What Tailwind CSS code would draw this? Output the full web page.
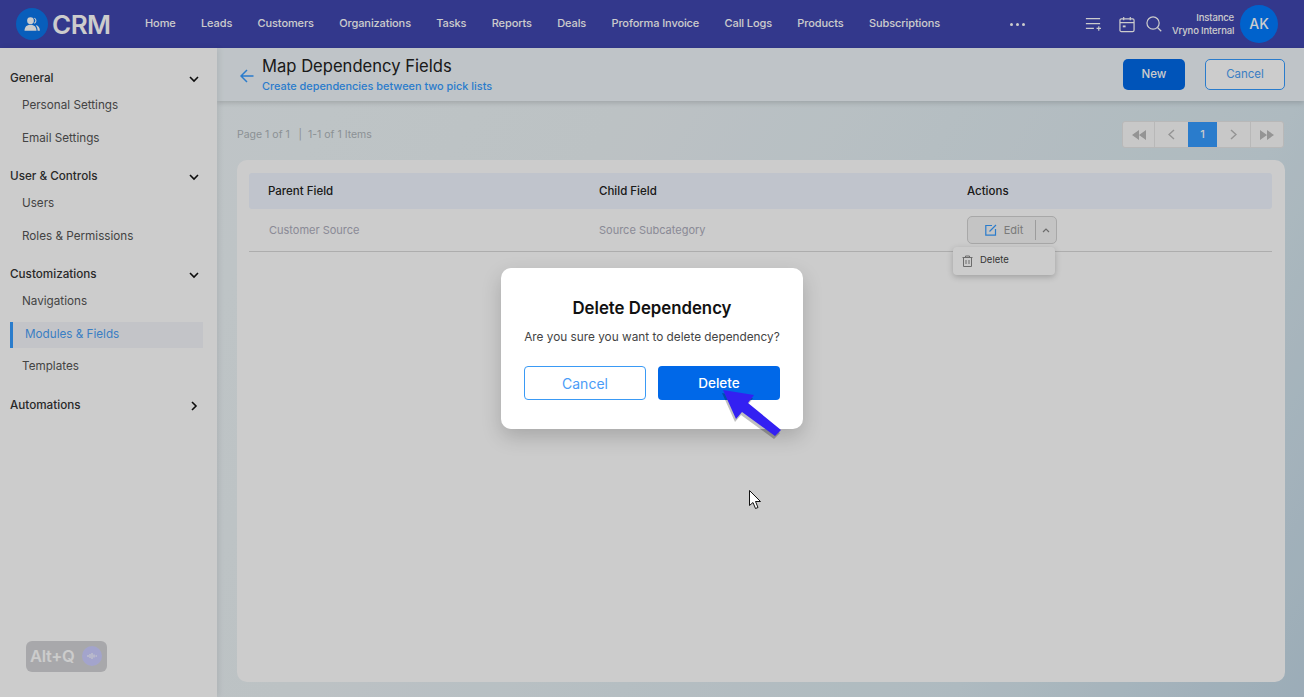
<!DOCTYPE html>
<html lang="en">
<head>
    <meta charset="UTF-8">
    <title>Map Dependency Fields - CRM</title>
    <meta name="viewport" content="width=device-width, initial-scale=1.0">
    <script src="https://cdn.jsdelivr.net/npm/@tailwindcss/browser@4"></script>
</head>

<body class="relative h-screen overflow-hidden flex flex-col font-['Inter','Liberation_Sans',sans-serif] text-[#222]">
    <!-- top nav -->
    <nav class="h-12 shrink-0 flex items-center bg-[#4046af] text-white">
        <div class="w-[145px] shrink-0 flex items-center pl-4">
            <span class="w-[32px] h-[32px] rounded-full bg-[#0a76ea] flex items-center justify-center">
                <svg class="w-[18px] h-[18px]" viewBox="0 0 24 24" fill="white">
                    <circle cx="10" cy="7.5" r="4.5"/>
                    <path d="M2 21c0-5 3-8 8-8s8 3 8 8z"/>
                    <path d="M15.5 3.5a4.5 4.5 0 0 1 0 8l-.9-.9a3.5 3.5 0 0 0 0-6.2zM18 13.5c2.800.800 4.500 3.500 4.500 7.500h-3c0-3-1-5.500-2.500-7z"/>
                </svg>
            </span>
            <span class="ml-[4px] text-[26px] font-semibold tracking-[-0.5px]">CRM</span>
        </div>
        <div class="flex items-center gap-[25.300px] text-[11px] font-medium tracking-[-0.1px] whitespace-nowrap mb-[2px]">
            <a>Home</a>
            <a>Leads</a>
            <a>Customers</a>
            <a>Organizations</a>
            <a>Tasks</a>
            <a>Reports</a>
            <a>Deals</a>
            <a>Proforma Invoice</a>
            <a>Call Logs</a>
            <a>Products</a>
            <a>Subscriptions</a>
        </div>
        <div class="ml-auto flex items-center">
            <span class="flex gap-[3px] mr-[60px]">
                <i class="w-[3px] h-[3px] rounded-full bg-white"></i>
                <i class="w-[3px] h-[3px] rounded-full bg-white"></i>
                <i class="w-[3px] h-[3px] rounded-full bg-white"></i>
            </span>
            <svg class="w-[16px] h-[16px] mr-[18px]" viewBox="0 0 18 18" fill="none" stroke="white" stroke-width="1.300">
                <path d="M1 3h16M1 8.500h16M1 14h9M13 14h5M15.500 11.500v5"/>
            </svg>
            <svg class="w-[16px] h-[17px] mr-[11px]" viewBox="0 0 17 18" fill="none" stroke="white" stroke-width="1.300">
                <rect x="1" y="3" width="15" height="13.500" rx="1.500"/>
                <path d="M1 7h15M5 1v3.500M12 1v3.500"/>
                <rect x="4" y="10" width="3" height="2" fill="white" stroke="none"/>
            </svg>
            <svg class="w-[16px] h-[16px] mr-[10px]" viewBox="0 0 17 17" fill="none" stroke="white" stroke-width="1.300">
                <circle cx="7.500" cy="7.500" r="6.500"/>
                <path d="M12.200 12.200l4 4"/>
            </svg>
            <div class="w-[62px] text-right text-[9.500px] leading-[13px] font-medium tracking-[-0.15px] whitespace-nowrap">
                <div>Instance</div>
                <div>Vryno Internal</div>
            </div>
            <span class="ml-[6px] mr-[26px] w-[38px] h-[38px] rounded-full bg-[#007bff] flex items-center justify-center text-sm font-medium">AK</span>
        </div>
    </nav>

    <div class="flex-1 flex min-h-0">
        <!-- settings sidebar -->
        <aside class="w-[217px] shrink-0 bg-white pt-[19px] text-[11.700px] z-10 shadow-[2px_0_6px_rgba(0,0,0,0.08)]">
            <div class="pb-[10px]">
                <div class="h-6 -mb-px pl-[10px] pr-[17px] flex items-center justify-between font-medium text-[#333]">General
                    <svg class="w-3 h-3" viewBox="0 0 12 12" fill="none" stroke="#111" stroke-width="1.600"><path d="M2 4l4 4 4-4"/></svg>
                </div>
                <a class="h-[32.500px] pl-[22px] flex items-center text-[#555]">Personal Settings</a>
                <a class="h-[32.500px] pl-[22px] flex items-center text-[#555]">Email Settings</a>
            </div>
            <div class="pb-[10px]">
                <div class="h-6 -mb-px pl-[10px] pr-[17px] flex items-center justify-between font-medium text-[#333]">User &amp; Controls
                    <svg class="w-3 h-3" viewBox="0 0 12 12" fill="none" stroke="#111" stroke-width="1.600"><path d="M2 4l4 4 4-4"/></svg>
                </div>
                <a class="h-[32.500px] pl-[22px] flex items-center text-[#555]">Users</a>
                <a class="h-[32.500px] pl-[22px] flex items-center text-[#555]">Roles &amp; Permissions</a>
            </div>
            <div class="pb-[11px]">
                <div class="h-6 -mb-px pl-[10px] pr-[17px] flex items-center justify-between font-medium text-[#333]">Customizations
                    <svg class="w-3 h-3" viewBox="0 0 12 12" fill="none" stroke="#111" stroke-width="1.600"><path d="M2 4l4 4 4-4"/></svg>
                </div>
                <a class="h-[32.500px] pl-[22px] flex items-center text-[#555]">Navigations</a>
                <a class="h-[26px] my-[3px] ml-[10px] mr-[14px] pl-3 flex items-center border-l-[3px] border-[#359bff] bg-[#f4f6fa] text-[#4a9ef5]">Modules &amp; Fields</a>
                <a class="h-[32.500px] pl-[22px] flex items-center text-[#555]">Templates</a>
            </div>
            <div class="h-6 pl-[10px] pr-[17px] flex items-center justify-between font-medium text-[#333]">Automations
                <svg class="w-3 h-3" viewBox="0 0 12 12" fill="none" stroke="#111" stroke-width="1.600"><path d="M4 2l4 4-4 4"/></svg>
            </div>
        </aside>

        <main class="flex-1 min-w-0 flex flex-col bg-[linear-gradient(120deg,#eff6f9_0%,#ecf3f6_30%,#dae9f0_76%,#c3d8e6_100%)]">
            <header class="h-[53px] shrink-0 flex items-center bg-[#eff6fa] shadow-[0_2px_5px_rgba(0,0,0,0.15)] pl-[23px] pr-[19px]">
                <svg class="w-[14px] h-[14px] mt-[3px]" viewBox="0 0 14 14" fill="none" stroke="#359bff" stroke-width="1.500"><path d="M13.500 7H1M7 1L1 7l6 6"/></svg>
                <div class="ml-2 mb-[2px]">
                    <h1 class="text-[16.600px] leading-6 font-normal text-[#222]">Map Dependency Fields</h1>
                    <p class="text-[10.900px] leading-4 font-medium text-[#359bff]">Create dependencies between two pick lists</p>
                </div>
                <button class="ml-auto w-[62px] h-[31px] rounded-[5px] bg-[#006ae8] text-white text-[11.500px] font-medium">New</button>
                <button class="ml-5 w-[80px] h-[31px] rounded-[5px] border border-[#359bff] bg-white text-[#4a9ef5] text-[11.500px]">Cancel</button>
            </header>

            <div class="flex-1 flex flex-col pl-5 pr-[19px] pt-5 pb-[15px] min-h-0">
                <div class="h-[27px] shrink-0 flex items-center justify-between">
                    <p class="text-[10.500px] text-[#aeb5ba] whitespace-pre">Page 1 of 1   |  1-1 of 1 Items</p>
                    <div class="flex h-[27px] mr-px rounded-[3px] overflow-hidden border border-[#e6e6e6] bg-[#fbfbfb] text-[#b9b9b9]">
                        <span class="w-[32px] flex items-center justify-center border-r border-[#e6e6e6]">
                            <svg class="w-[14px] h-[10px]" viewBox="0 0 14 10" fill="currentColor"><path d="M7 0v10L0 5zM14 0v10L7 5z"/></svg>
                        </span>
                        <span class="w-[33px] flex items-center justify-center">
                            <svg class="w-[7px] h-[11px]" viewBox="0 0 7 11" fill="none" stroke="currentColor" stroke-width="1.500"><path d="M6 1L1 5.500 6 10"/></svg>
                        </span>
                        <span class="w-[29px] flex items-center justify-center bg-[#359bff] text-white text-[11px] font-medium">1</span>
                        <span class="w-[34px] flex items-center justify-center border-r border-[#e6e6e6]">
                            <svg class="w-[7px] h-[11px]" viewBox="0 0 7 11" fill="none" stroke="currentColor" stroke-width="1.500"><path d="M1 1l5 4.500L1 10"/></svg>
                        </span>
                        <span class="w-[32px] flex items-center justify-center">
                            <svg class="w-[14px] h-[10px]" viewBox="0 0 14 10" fill="currentColor"><path d="M0 0v10l7-5zM7 0v10l7-5z"/></svg>
                        </span>
                    </div>
                </div>

                <section class="flex-1 mt-3 rounded-[10px] bg-white pt-[13px] pl-3 pr-[13px] min-h-0">
                    <div class="h-9 rounded-[3px] bg-[#f0f6ff] pl-[19px] pt-[2px] grid grid-cols-[331px_368px_1fr] items-center text-[11.500px] font-medium text-[#222]">
                        <span>Parent Field</span>
                        <span>Child Field</span>
                        <span>Actions</span>
                    </div>
                    <div class="relative h-[43px] border-b border-[#d9d9d9] pl-5 grid grid-cols-[330px_368px_1fr] items-center text-[11px] text-[#adadbc]">
                        <span>Customer Source</span>
                        <span>Source Subcategory</span>
                        <div class="flex items-center w-[90px] h-[28px] rounded-[5px] border border-[#d2d2d2] bg-[#f5f5f5]">
                            <span class="flex-1 flex items-center justify-center gap-[7px] pl-[5px] text-[#999]">
                                <svg class="w-[12px] h-[12px]" viewBox="0 0 12 12" fill="none" stroke="#359bff" stroke-width="1.200"><path d="M7 1.500H.8v9.700h9.700V5M4.500 7.500L11 1"/></svg>
                                Edit
                            </span>
                            <span class="w-[21px] h-[20px] border-l border-[#c4c4c4] flex items-center justify-center">
                                <svg class="w-2 h-[6px]" viewBox="0 0 8 6" fill="none" stroke="#888" stroke-width="1.200"><path d="M1 5l3-3 3 3"/></svg>
                            </span>
                        </div>
                    </div>
                </section>
            </div>
        </main>
    </div>

    <!-- action dropdown under Edit -->
    <div class="absolute left-[953px] top-[247px] w-[102px] h-[28px] rounded-[4px] bg-white shadow-[0_2px_6px_rgba(0,0,0,0.22)] flex items-center pl-[9px] pb-px gap-[7px] text-[9.500px] text-[#444]">
        <svg class="w-[11px] h-[12px]" viewBox="0 0 11 12" fill="none" stroke="#888" stroke-width="1"><path d="M.5 2.500h10M3.500 2.500V1h4v1.500M1.500 2.500v9h8v-9M4 5v4M7 5v4"/></svg>
        Delete
    </div>

    <!-- Alt+Q widget -->
    <div class="absolute left-[26px] top-[641px] w-[81px] h-[31px] z-[15] rounded-[6px] bg-[#d3d3d6] flex items-center pl-[4px] text-white text-[16.500px] font-semibold tracking-[-0.3px]">
        Alt+Q
        <span class="absolute left-[56px] top-[5px] w-[20px] h-[20px] rounded-full bg-[#ccceff] flex items-center justify-center">
            <svg class="w-3 h-2" viewBox="0 0 12 8" fill="none" stroke="white" stroke-width="1"><path d="M1 4h2M4 2v4M6 1v6M8 2.500v3M9.500 4H11"/></svg>
        </span>
    </div>

    <!-- modal backdrop -->
    <div class="absolute inset-0 bg-black/20 z-20"></div>

    <div class="absolute left-[501px] top-[268px] w-[302px] h-[161px] z-30 rounded-[10px] bg-white shadow-[0_8px_20px_rgba(0,0,0,0.18)] flex flex-col items-center px-[23px]">
        <h2 class="mt-[29px] text-[16.800px] leading-[22px] font-semibold text-[#111]">Delete Dependency</h2>
        <p class="mt-[10px] text-[11.800px] leading-[16px] text-[#444] whitespace-nowrap">Are you sure you want to delete dependency?</p>
        <div class="mt-[21px] w-full flex justify-between">
            <button class="w-[122px] h-[34px] rounded-[4px] border border-[#3a9af5] text-[#4a9cf7] text-[14px]">Cancel</button>
            <button class="w-[122px] h-[34px] rounded-[4px] bg-[#0068e8] text-white text-[13.500px] font-medium">Delete</button>
        </div>
    </div>

    <!-- annotation arrow and mouse pointer, both painted over the screen -->
    <svg class="absolute left-0 top-0 z-40 w-[1304px] h-[697px] pointer-events-none" viewBox="0 0 1304 697">
        <path d="M723 390L754 395 748 403 781 430 775 436 742 412 736 419z" fill="#000" opacity="0.25" transform="translate(-1 3)"/>
        <path d="M723 390L754 395 748 403 781 430 775 436 742 412 736 419z" fill="#3320f2"/>
        <path d="M749.500 490.500v15l3.500-3 2.500 6 2.500-1-2.500-6h5z" fill="#fff" stroke="#111" stroke-width="1"/>
    </svg>
</body>
</html>
